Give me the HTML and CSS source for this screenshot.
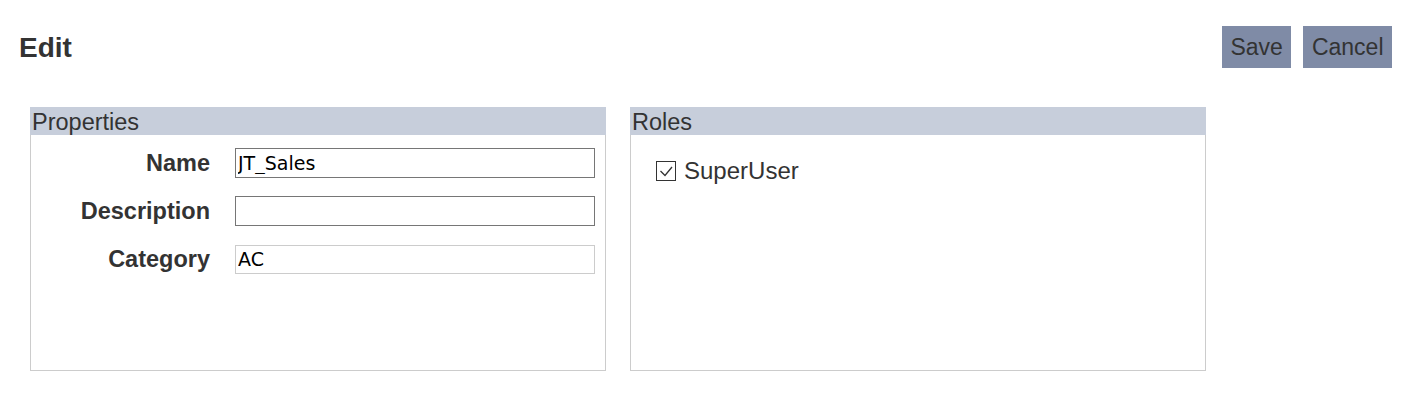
FILE: index.html
```html
<!DOCTYPE html>
<html lang="en">
<head>
    <meta charset="UTF-8">
    <title>Edit</title>
    <link rel="stylesheet" href="styles.css">
</head>
<body>
    <div class="topbar">
        <h1>Edit</h1>
        <div class="actions">
            <button type="button" class="btn">Save</button>
            <button type="button" class="btn">Cancel</button>
        </div>
    </div>

    <div class="panels">
        <div class="panel">
            <div class="panel-title">Properties</div>
            <div class="panel-body props">
                <div class="row">
                    <label for="nameInput">Name</label>
                    <input type="text" id="nameInput" value="JT_Sales">
                </div>
                <div class="row">
                    <label for="descInput">Description</label>
                    <input type="text" id="descInput" value="">
                </div>
                <div class="row">
                    <label for="catInput">Category</label>
                    <input type="text" id="catInput" class="readonly" value="AC" readonly>
                </div>
            </div>
        </div>

        <div class="panel">
            <div class="panel-title">Roles</div>
            <div class="panel-body roles">
                <label class="role">
                    <svg class="check" width="20" height="20" viewBox="0 0 20 20">
                        <rect x="0.5" y="0.5" width="19" height="19" fill="#fff" stroke="#333"/>
                        <path d="M4.5 10 L9 14.5 L16 6" fill="none" stroke="#333" stroke-width="1.3"/>
                    </svg>
                    SuperUser
                </label>
            </div>
        </div>
    </div>
</body>
</html>
```

FILE: styles.css
```css
body {
    font-family: "Liberation Sans", Arial, sans-serif;
    margin: 0;
    padding: 0;
    background-color: #fff;
    color: #333;
}

.topbar {
    display: flex;
    justify-content: space-between;
    align-items: flex-start;
    padding: 26px 17px 0 19px;
    height: 81px;
}

h1 {
    margin: 0;
    padding-top: 7px;
    font-size: 28px;
    line-height: 30px;
    font-weight: bold;
}

.actions {
    display: flex;
    gap: 12px;
}

.btn {
    height: 42px;
    padding: 0 8.5px;
    background-color: #7f8ba6;
    color: #333;
    border: none;
    font-family: "Liberation Sans", Arial, sans-serif;
    font-size: 23px;
    cursor: pointer;
}

.panels {
    display: flex;
    gap: 24px;
    padding-left: 30px;
}

.panel {
    width: 576px;
    height: 264px;
    display: flex;
    flex-direction: column;
}

.panel-title {
    height: 28px;
    line-height: 30px;
    background-color: #c7cedb;
    font-size: 23.5px;
    padding-left: 2px;
}

.panel-body {
    flex: 1;
    border: 1px solid #ccc;
    border-top: none;
}

.props {
    padding-top: 13px;
    display: flex;
    flex-direction: column;
    gap: 18px;
}

.row {
    display: flex;
    align-items: center;
    height: 30px;
}

.row label {
    width: 179px;
    text-align: right;
    font-weight: bold;
    font-size: 23.5px;
    margin-right: 25px;
}

.row input {
    box-sizing: border-box;
    width: 360px;
    height: 30px;
    margin: 0;
    padding: 0 2px;
    border: 1px solid #767676;
    font-family: "DejaVu Sans", Tahoma, sans-serif;
    font-size: 19px;
    color: #000;
}

.row input.readonly {
    border-color: #ccc;
    height: 29px;
}

.roles {
    padding: 25px 0 0 25px;
}

.role {
    display: flex;
    align-items: center;
    gap: 8px;
    font-size: 24px;
    line-height: 22px;
}

.check {
    flex: none;
}
```
